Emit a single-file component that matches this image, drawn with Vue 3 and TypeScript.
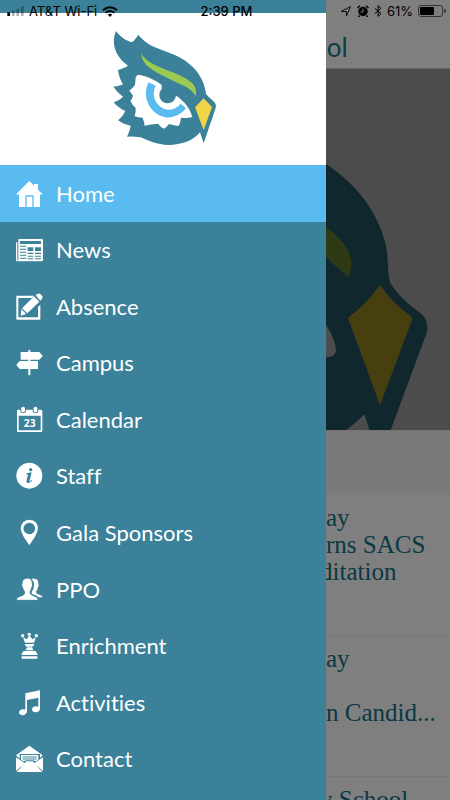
<script setup lang="ts">
import { ref } from 'vue'

interface MenuItem {
  id: string
  label: string
}

interface Story {
  id: number
  lines: { text: string; tucked?: boolean }[]
}

const items: MenuItem[] = [
  { id: 'home', label: 'Home' },
  { id: 'news', label: 'News' },
  { id: 'absence', label: 'Absence' },
  { id: 'campus', label: 'Campus' },
  { id: 'calendar', label: 'Calendar' },
  { id: 'staff', label: 'Staff' },
  { id: 'gala', label: 'Gala Sponsors' },
  { id: 'ppo', label: 'PPO' },
  { id: 'enrichment', label: 'Enrichment' },
  { id: 'activities', label: 'Activities' },
  { id: 'contact', label: 'Contact' },
]

const stories: Story[] = [
  { id: 1, lines: [{ text: 'ay' }, { text: 'rns SACS' }, { text: 'ditation', tucked: true }] },
  { id: 2, lines: [{ text: 'ay' }, { text: '' }, { text: 'n Candid...' }] },
  { id: 3, lines: [{ text: 'y School', tucked: true }] },
]

const active = ref('home')
</script>

<template>
  <div class="screen">
    <main class="page">
      <header class="page-head"><h1>ool</h1></header>
      <div class="hero">
        <svg class="hero-art" viewBox="0 0 372 1083" aria-hidden="true">
          <path fill="#204e5c" d="M0 285C100 350 160 440 180 530C188 570 184 610 192 640C215 680 250 708 286 735Q310 756 302 792L194 1083H130L115 1036Q90 1063 60 1083H0Z" />
          <path fill="#5a7527" d="M0 475C35 500 65 530 74 565Q82 595 66 625L0 564Z" />
          <path fill="#999" d="M0 768Q26 805 30 843Q29 860 10 864L0 865Z" />
          <path fill="#8f7f20" d="M162 648Q202 706 255 742Q260 747 257 756L162 1009L68 752Q65 746 69 743Q119 709 162 648Z" />
        </svg>
      </div>
      <div class="band"></div>
      <article v-for="story in stories" :key="story.id" class="story">
        <h2>
          <span v-for="(line, i) in story.lines" :key="i" :class="{ tucked: line.tucked }">{{ line.text }}</span>
        </h2>
      </article>
    </main>
    <div class="scrim"></div>

    <aside class="drawer">
      <div class="brand">
        <svg class="owl" viewBox="30 30 318 348" role="img" aria-label="Owl logo">
          <path fill="#3a8199" d="M48 33C58 48 80 65 97 66C103 62 109 53 115 44C125 57 142 72 165 82C200 96 240 108 268 132C300 158 314 190 318 222C326 232 338 240 345 249Q349 255 347 264L311 370L300 337C280 362 245 375 205 375C170 374 145 362 122 352Q102 349 81 350C87 338 91 325 92 317C78 315 65 309 54 301C64 293 71 283 76 273C63 268 50 258 41 247C52 243 62 237 69 230C57 222 46 210 40 199C50 200 60 197 69 193C61 180 56 165 54 150C64 147 74 143 84 137C55 118 38 85 42 55C43 47 45 40 48 33Z" />
          <path fill="#9aca52" d="M124 99C132 118 150 128 180 142C205 153 235 162 260 177C282 190 292 205 288 228C282 222 272 208 260 202C245 194 225 186 210 178L180 163C150 146 124 130 124 99Z" />
          <path fill="#fff" d="M116 164C145 168 172 184 200 204L230 228C252 244 270 263 277 291Q262 296 243 293Q242 306 236 318Q220 317 207 312Q200 321 192 326Q181 321 174 311Q154 312 134 317Q132 304 128 293Q116 293 104 289Q108 276 107 264Q96 254 91 242Q97 236 99 227Q94 219 88 212Q98 204 105 195Q106 185 107 172Q110 164 116 164Z" />
          <circle cx="203" cy="225" r="25" fill="#3a8199" />
          <path fill="#3a8199" d="M185 188L232 222L229 229L217 226L185 210Z" />
          <path fill="#5abbf1" d="M146 187A73 73 0 0 0 203 293A73 73 0 0 0 258 265L242 251A49 49 0 0 1 203 269A49 49 0 0 1 167 197Z" />
          <path fill="#f0d548" d="M311 235L336 261L311 331L285 262Z" />
        </svg>
      </div>
      <nav class="menu" aria-label="Main">
        <a
          v-for="item in items"
          :key="item.id"
          :href="'#' + item.id"
          class="entry"
          :class="{ active: active === item.id }"
          @click.prevent="active = item.id"
        >
          <svg class="icon" viewBox="0 -2 81 81" aria-hidden="true">
            <g v-if="item.id === 'home'">
              <path d="M40 1L54 15V10H66V27L79 40L76 43L72 40V79H53V44H28V79H9V40L4 43L1 40Z" />
              <path d="M32 48H49V79H32Z" />
            </g>
            <g v-else-if="item.id === 'news'">
              <path d="M0 17H4V70H8V74H4Q0 74 0 69Z" />
              <path fill-rule="evenodd" d="M9 7H77Q81 7 81 11V70Q81 74 77 74H11Q7 74 7 69V10Q7 7 9 7ZM12 13V22H75V13ZM12 27V30H31V27ZM35 32V43H52V32ZM57 32V43H75V32ZM12 36V39H31V36ZM12 45V48H31V45ZM12 54V57H31V54ZM12 63V66H31V63ZM35 48V52H52V48ZM57 48V52H75V48ZM35 57V60H52V57ZM57 57V60H75V57ZM35 65V68H52V65ZM57 65V68H75V65Z" />
            </g>
            <g v-else-if="item.id === 'absence'">
              <path d="M2 6H54L48 13H7V71H66V40L73 33V76Q73 78 70 78H3Q1 78 1 76V9Q1 6 2 6Z" />
              <path d="M54 8L70 24L34 59L18 44ZM16 47L31 61L14 66ZM59 5Q64 -1 71 0Q79 3 80 11Q79 17 73 21Z" />
            </g>
            <g v-else-if="item.id === 'campus'">
              <path d="M37 3Q37 0 40 0Q43 0 43 3V7H70L80 19L70 30H43V34H66V58H43V75Q43 77 40 77Q37 77 37 75V58H11L1 46L11 34H37V30H14V7H37Z" />
            </g>
            <g v-else-if="item.id === 'calendar'">
              <path fill-rule="evenodd" d="M6 9H13V14Q15 20 22 20Q29 20 30 14V9H50V14Q51 20 59 20Q66 20 67 14V9H75Q79 9 79 13V72Q79 76 75 76H6Q3 76 3 72V13Q3 9 6 9ZM8 27V71H74V27Z" />
              <rect x="16" y="0" width="11" height="17" rx="5" />
              <rect x="53" y="0" width="11" height="17" rx="5" />
              <text x="41" y="60" class="date">23</text>
            </g>
            <g v-else-if="item.id === 'staff'">
              <circle cx="40" cy="39" r="39" />
              <circle cx="44" cy="21" r="5" class="cut" />
              <path class="cut" d="M32 32L47 29L40 57Q44 56 47 51L49 53Q43 62 36 61Q29 59 32 51L36 36L31 35Z" />
            </g>
            <g v-else-if="item.id === 'gala'">
              <path fill-rule="evenodd" d="M40 0Q65 2 66 26Q65 39 57 51L40 77L23 51Q15 39 14 26Q16 2 40 0ZM40 9A17 17 0 1 0 40 44A17 17 0 1 0 40 9Z" />
            </g>
            <g v-else-if="item.id === 'ppo'">
              <path d="M46 8Q50 4 54 6Q68 6 67 22Q70 27 65 34Q64 40 60 45Q60 51 67 53Q79 57 80 62H68Q62 56 50 53Q46 51 47 46Q54 37 54 29Q55 12 46 8Z" />
              <path class="front" d="M34 4Q49 4 49 21Q52 26 47 33Q44 42 42 47Q43 54 50 56L60 60Q67 64 67 71H0Q0 63 9 60L22 55Q28 51 25 44Q21 39 20 33Q15 27 18 21Q18 5 34 4Z" />
            </g>
            <g v-else-if="item.id === 'enrichment'">
              <circle cx="40" cy="5" r="5" />
              <circle cx="20" cy="9" r="5" />
              <circle cx="61" cy="9" r="5" />
              <path d="M21 14L32 20L40 8L49 20L60 14L54 30H27ZM27 34H54V38L49 42H32L27 38ZM33 44H48L52 53H29ZM24 55H57Q60 55 60 59L64 62V67H17V62L21 59Q21 55 24 55ZM17 71H64V78H17Z" />
            </g>
            <g v-else-if="item.id === 'activities'">
              <path fill-rule="evenodd" d="M28 11L72 2V58Q70 68 58 68Q48 67 48 59Q49 50 61 50L67 51V24L33 31V65Q31 76 19 77Q9 75 9 68Q10 60 21 59L28 60Z" />
            </g>
            <g v-else>
              <path d="M40 0L80 29L72 37V25H11V39L0 29Z" />
              <path d="M15 28H67V42L60 47L50 44H31L22 47L15 42Z" />
              <path d="M0 35L27 53L0 76ZM81 35V76L54 53ZM31 47H50L79 79H2Z" />
              <path class="rule" d="M20 34H62M20 40H62" />
            </g>
          </svg>
          <span>{{ item.label }}</span>
        </a>
      </nav>
    </aside>

    <div class="status">
      <div class="status-left">
        <svg class="bars" viewBox="0 0 18 11" aria-hidden="true">
          <path d="M0 7h3v4H0z" />
          <path opacity=".3" d="M5 5h3v6H5zM10 3h3v8h-3zM15 0h3v11h-3z" />
        </svg>
        <span>AT&amp;T Wi-Fi</span>
        <svg class="wifi" viewBox="0 0 16 11" aria-hidden="true">
          <path d="M1 4.2Q8 -1.600 15 4.200M3.700 6.700Q8 3.200 12.300 6.700" fill="none" stroke="#000" stroke-width="2" />
          <path d="M5.700 8.500Q8 6.900 10.300 8.500L8 11Z" />
        </svg>
      </div>
      <span class="clock">2:39 PM</span>
      <div class="status-right">
        <svg class="glyph" viewBox="0 0 12 12" aria-hidden="true">
          <path d="M1 6.500L10.500 1.500L6.500 11V6.500Z" fill="none" stroke="#111" />
        </svg>
        <svg class="glyph" viewBox="0 0 12 12" aria-hidden="true">
          <circle cx="6" cy="6.500" r="4.700" />
          <path d="M.5 3L3 .8M11.500 3L9 .8M2.500 10.500L1.500 12M9.500 10.500L10.500 12" stroke="#000" stroke-width="1.500" />
          <path d="M6 3.500V7H3.500" fill="none" stroke="#808080" />
        </svg>
        <svg class="bluetooth" viewBox="0 0 8 12" aria-hidden="true">
          <path d="M.7 3.300L7 8.700L4 11.300V.7L7 3.300L.7 8.700" fill="none" stroke="#000" />
        </svg>
        <span>61%</span>
        <svg class="battery" viewBox="0 0 28 12" aria-hidden="true">
          <rect x=".5" y=".5" width="24" height="11" rx="2.500" fill="none" stroke="#333" />
          <rect x="2" y="2" width="14" height="8" rx="1" />
          <path d="M26 4Q28 4.500 28 6Q28 7.500 26 8Z" fill="#333" />
        </svg>
      </div>
    </div>
  </div>
</template>

<style>
body {
  margin: 0;
}
</style>

<style scoped>
.screen {
  --drawer: calc(100% - 124px);
  position: relative;
  height: 100vh;
  overflow: hidden;
  background: #fff;
  font-family: Lato, "Liberation Sans", sans-serif;
}
.page-head {
  box-sizing: border-box;
  height: 69px;
  padding-top: 30px;
  padding-left: var(--drawer);
  border-bottom: 1px solid #ccc;
}
.page-head h1 {
  margin: 0;
  color: #147a92;
  font-size: 26px;
  font-weight: 400;
  line-height: 34px;
  text-indent: -14px;
}
.tucked {
  text-indent: -6px;
}
.hero {
  display: flex;
  justify-content: flex-end;
  background: #999;
}
.hero-art {
  display: block;
  width: 124px;
  height: 361px;
}
.band {
  box-sizing: border-box;
  height: 65px;
  border-top: 1px solid #e6e6e6;
  background: #f4f4f4;
}
.story {
  box-sizing: border-box;
  height: 141px;
  padding-top: 9px;
  padding-left: var(--drawer);
  border-bottom: 1px solid #f0f0f0;
}
.story h2 {
  display: grid;
  grid-auto-rows: 27px;
  margin: 0;
  color: #117389;
  font-family: "Liberation Serif", serif;
  font-size: 25px;
  font-weight: 400;
  line-height: 27px;
  white-space: nowrap;
}
.scrim {
  position: absolute;
  inset: 0;
  background: rgba(0, 0, 0, 0.5);
}
.drawer {
  position: absolute;
  top: 0;
  bottom: 0;
  left: 0;
  width: var(--drawer);
  background: #3a8199;
}
.brand {
  box-sizing: border-box;
  height: 165px;
  padding-top: 17px;
  border-top: 13px solid #3a8199;
  background: #fff;
}
.owl {
  display: block;
  width: 106px;
  height: 116px;
  margin: 0 auto;
}
.menu {
  display: grid;
  grid-auto-rows: 1fr;
  height: 622px;
}
.entry {
  display: flex;
  align-items: center;
  gap: 13px;
  padding-left: 16px;
  color: #fff;
  font-size: 22px;
  font-variant-ligatures: none;
  text-decoration: none;
}
.active {
  background: #5abbf1;
}
.icon {
  width: 27px;
  height: 27px;
  overflow: visible;
  fill: #fff;
}
.cut {
  fill: #3a8199;
}
.front {
  stroke: #3a8199;
  stroke-width: 3;
}
.rule {
  stroke: #3a8199;
  stroke-width: 3;
}
.date {
  font-family: "Open Sans", sans-serif;
  font-size: 31px;
  font-weight: 700;
  text-anchor: middle;
}
.status {
  position: absolute;
  top: 3px;
  right: 4px;
  left: 7px;
  display: grid;
  grid-template-columns: 1fr auto 1fr;
  align-items: center;
  color: #000;
  font-family: Inter, "Liberation Sans", sans-serif;
  font-size: 13px;
  line-height: 16px;
}
.status-left,
.status-right {
  display: flex;
  align-items: center;
  gap: 5px;
}
.status-right {
  justify-content: flex-end;
}
.clock {
  font-weight: 500;
}
.bars {
  width: 17px;
  height: 10px;
}
.wifi {
  width: 16px;
  height: 11px;
}
.glyph {
  width: 12px;
  height: 12px;
}
.bluetooth {
  width: 8px;
  height: 12px;
}
.battery {
  width: 28px;
  height: 12px;
}
</style>
